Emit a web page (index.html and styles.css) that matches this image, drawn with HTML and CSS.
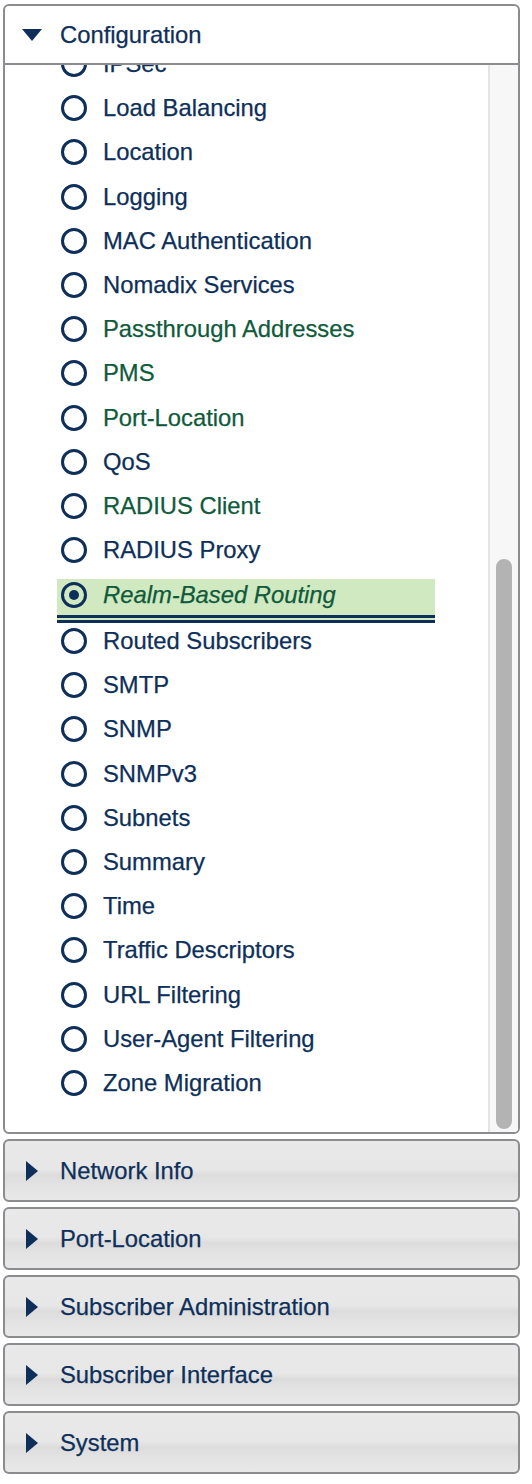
FILE: index.html
```html
<!DOCTYPE html>
<html lang="en">
<head>
<meta charset="utf-8">
<title>Configuration</title>
<link rel="stylesheet" href="styles.css">
</head>
<body>
<div class="panel config">
  <div class="head"><span class="tri-down"></span><span class="title">Configuration</span></div>
  <div class="body">
    <div class="list">
      <ul>
        <li><span class="radio"></span><span>IPSec</span></li>
        <li><span class="radio"></span><span>Load Balancing</span></li>
        <li><span class="radio"></span><span>Location</span></li>
        <li><span class="radio"></span><span>Logging</span></li>
        <li><span class="radio"></span><span>MAC Authentication</span></li>
        <li><span class="radio"></span><span>Nomadix Services</span></li>
        <li class="visited"><span class="radio"></span><span>Passthrough Addresses</span></li>
        <li class="visited"><span class="radio"></span><span>PMS</span></li>
        <li class="visited"><span class="radio"></span><span>Port-Location</span></li>
        <li><span class="radio"></span><span>QoS</span></li>
        <li class="visited"><span class="radio"></span><span>RADIUS Client</span></li>
        <li><span class="radio"></span><span>RADIUS Proxy</span></li>
        <li class="sel"><div class="hl"><span class="radio on"></span><span>Realm-Based Routing</span></div></li>
        <li><span class="radio"></span><span>Routed Subscribers</span></li>
        <li><span class="radio"></span><span>SMTP</span></li>
        <li><span class="radio"></span><span>SNMP</span></li>
        <li><span class="radio"></span><span>SNMPv3</span></li>
        <li><span class="radio"></span><span>Subnets</span></li>
        <li><span class="radio"></span><span>Summary</span></li>
        <li><span class="radio"></span><span>Time</span></li>
        <li><span class="radio"></span><span>Traffic Descriptors</span></li>
        <li><span class="radio"></span><span>URL Filtering</span></li>
        <li><span class="radio"></span><span>User-Agent Filtering</span></li>
        <li><span class="radio"></span><span>Zone Migration</span></li>
      </ul>
    </div>
    <div class="track"><div class="thumb"></div></div>
  </div>
</div>
<div class="panel closed"><span class="tri-right"></span><span class="title">Network Info</span></div>
<div class="panel closed"><span class="tri-right"></span><span class="title">Port-Location</span></div>
<div class="panel closed"><span class="tri-right"></span><span class="title">Subscriber Administration</span></div>
<div class="panel closed"><span class="tri-right"></span><span class="title">Subscriber Interface</span></div>
<div class="panel closed"><span class="tri-right"></span><span class="title">System</span></div>
</body>
</html>
```

FILE: styles.css
```css
* { box-sizing: border-box; }

body {
  margin: 0;
  padding: 4px 12px 0 3px;
  background: #ffffff;
  font-family: "Liberation Sans", Arial, sans-serif;
  color: #0d2f5a;
  -webkit-text-stroke: 0.25px currentColor;
}

.panel {
  border: 2px solid #8a8c8f;
  border-radius: 6px;
}

.config {
  height: 1130px;
  display: flex;
  flex-direction: column;
  overflow: hidden;
  background: #ffffff;
}

.head {
  height: 59px;
  flex: none;
  border-bottom: 2px solid #8a8c8f;
  display: flex;
  align-items: center;
  padding-left: 17px;
  gap: 18px;
  font-size: 23.8px;
}

.tri-down {
  width: 20px;
  height: 0;
  border-left: 10px solid transparent;
  border-right: 10px solid transparent;
  border-top: 12px solid #0d2f5a;
  flex: none;
}

.body {
  flex: 1;
  min-height: 0;
  display: flex;
}

.list {
  flex: 1;
  overflow: hidden;
}

.list ul {
  list-style: none;
  margin: -23.1px 0 0;
  padding: 0 0 0 52px;
}

.list li {
  height: 44.2px;
  width: 378px;
  display: flex;
  align-items: center;
  padding-left: 4px;
  gap: 16px;
  font-size: 23.8px;
  white-space: nowrap;
}

.list li.visited {
  color: #0f5a3b;
}

.radio {
  width: 26px;
  height: 26px;
  flex: none;
  border: 3.5px solid #0d2f5a;
  border-radius: 50%;
  display: flex;
  align-items: center;
  justify-content: center;
}

.radio.on::after {
  content: "";
  width: 10px;
  height: 10px;
  border-radius: 50%;
  background: #0d2f5a;
}

.list li.sel {
  display: block;
  height: 46.8px;
  padding: 6.9px 0 0;
}

.hl {
  height: 44px;
  display: flex;
  align-items: center;
  padding: 0 0 4px 4px;
  gap: 16px;
  background: #d1e9c1;
  border-bottom: 8px double #0d2f5a;
  color: #0f5a3b;
  font-style: italic;
}

.track {
  width: 30px;
  flex: none;
  background: #f7f7f7;
  border-left: 2px solid #e4e4e4;
  padding: 494px 0 0 6px;
}

.thumb {
  width: 16px;
  height: 570px;
  border-radius: 8px;
  background: #b3b3b3;
}

.closed {
  height: 63px;
  margin-top: 5px;
  display: flex;
  align-items: center;
  padding-left: 17px;
  gap: 18px;
  font-size: 23.8px;
  background: linear-gradient(to bottom, #e9e9e9 0%, #e7e7e7 48%, #dcdcdc 58%, #e3e3e3 75%, #e8e8e8 100%);
}

.tri-right {
  width: 20px;
  height: 20px;
  flex: none;
  display: flex;
  justify-content: center;
  align-items: center;
}

.tri-right::before {
  content: "";
  width: 0;
  height: 0;
  border-top: 10px solid transparent;
  border-bottom: 10px solid transparent;
  border-left: 12px solid #0d2f5a;
}
```
